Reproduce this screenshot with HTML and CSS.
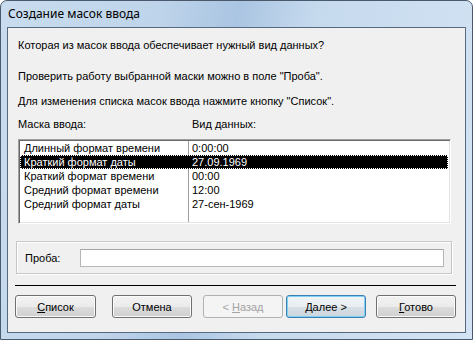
FILE: index.html
```html
<!DOCTYPE html>
<html lang="ru">
<head>
    <meta charset="UTF-8">
    <title>Создание масок ввода</title>
    <link rel="stylesheet" href="styles.css">
</head>
<body>

    <div class="window">
        <div class="titlebar">Создание масок ввода</div>

        <div class="client">
            <p class="line line-1">Которая из масок ввода обеспечивает нужный вид данных?</p>
            <p class="line line-2">Проверить работу выбранной маски можно в поле "Проба".</p>
            <p class="line line-3">Для изменения списка масок ввода нажмите кнопку "Список".</p>

            <div class="list-head">
                <span class="col-mask">Маска ввода:</span>
                <span class="col-data">Вид данных:</span>
            </div>

            <div class="listbox">
                <div class="row">
                    <span class="cell-mask">Длинный формат времени</span>
                    <span class="cell-data">0:00:00</span>
                </div>
                <div class="row selected">
                    <span class="cell-mask">Краткий формат даты</span>
                    <span class="cell-data">27.09.1969</span>
                </div>
                <div class="row">
                    <span class="cell-mask">Краткий формат времени</span>
                    <span class="cell-data">00:00</span>
                </div>
                <div class="row">
                    <span class="cell-mask">Средний формат времени</span>
                    <span class="cell-data">12:00</span>
                </div>
                <div class="row">
                    <span class="cell-mask">Средний формат даты</span>
                    <span class="cell-data">27-сен-1969</span>
                </div>
            </div>

            <div class="probe">
                <label for="probe" class="probe-label">Проба:</label>
                <input type="text" id="probe" class="probe-input">
            </div>

            <div class="separator"></div>

            <div class="buttons">
                <button class="btn btn-list"><u>С</u>писок</button>
                <button class="btn btn-cancel">Отмена</button>
                <button class="btn btn-back" disabled>&lt; <u>Н</u>азад</button>
                <button class="btn btn-next"><u>Д</u>алее &gt;</button>
                <button class="btn btn-done"><u>Г</u>отово</button>
            </div>
        </div>
    </div>

</body>
</html>
```

FILE: styles.css
```css
body {
    margin: 0;
    padding: 0;
    background-color: #ffffff;
    font-family: 'Liberation Sans', Arial, sans-serif;
    font-size: 11px;
}

.window {
    width: 473px;
    height: 340px;
    box-sizing: border-box;
    border: 1px solid #4a5a6c;
    border-radius: 7px 7px 0 0;
    background: linear-gradient(100deg, #c9dcef 0%, #bed4ea 30%, #aac5e2 45%, #c6daee 60%, #d3e3f3 100%);
    display: flex;
    flex-direction: column;
}

.titlebar {
    height: 26px;
    line-height: 26px;
    padding-left: 7px;
    font-family: 'Noto Sans', 'Open Sans', sans-serif;
    font-size: 12px;
    color: #000;
}

.client {
    margin: 0 6px 6px 6px;
    height: 306px;
    box-sizing: border-box;
    border: 1px solid #56697f;
    background-color: #f0f0f0;
    display: flex;
    flex-direction: column;
}

.line {
    margin: 0 0 0 10px;
    line-height: 14px;
    color: #000;
}

.line-1 {
    margin-top: 10px;
}

.line-2 {
    margin-top: 17px;
}

.line-3 {
    margin-top: 11px;
}

.list-head {
    display: flex;
    margin: 9px 0 0 10px;
    line-height: 14px;
}

.col-mask {
    width: 174px;
}

.listbox {
    margin: 8px 0 0 10px;
    width: 433px;
    height: 85px;
    box-sizing: border-box;
    border: 1px solid;
    border-color: #a0a0a0 #ffffff #ffffff #a0a0a0;
    box-shadow: inset 1px 1px 0 #696969, inset -1px -1px 0 #e3e3e3;
    padding: 1px 2px 0 1px;
    background: linear-gradient(to right, transparent 169px, #a0a0a0 169px, #a0a0a0 170px, transparent 170px), #ffffff;
}

.row {
    display: flex;
    height: 14px;
    line-height: 14px;
    color: #000;
}

.cell-mask {
    width: 168px;
    box-sizing: border-box;
    padding-left: 4px;
}

.cell-data {
    padding-left: 4px;
}

.selected {
    background-color: #000;
    color: #fff;
    outline: 1px dotted #ffffff;
    outline-offset: -1px;
}

.probe {
    margin: 17px 0 0 8px;
    width: 436px;
    height: 33px;
    box-sizing: border-box;
    border: 1px solid #c6c6c6;
    box-shadow: inset 1px 1px 0 #fff, 1px 1px 0 #fff;
    display: flex;
    align-items: center;
    padding-left: 8px;
}

.probe-label {
    width: 55px;
    color: #000;
}

.probe-input {
    width: 364px;
    height: 18px;
    box-sizing: border-box;
    border: 1px solid #b6b6b6;
    border-top-color: #a6a6a6;
    background-color: #fff;
    margin: 0;
    padding: 0 2px;
}

.separator {
    margin: 11px 0 0 7px;
    width: 441px;
    height: 1px;
    background-color: #000;
}

.buttons {
    display: flex;
    margin: 9px 0 0 7px;
}

.btn {
    width: 80px;
    height: 23px;
    padding: 0;
    font-family: 'Liberation Sans', Arial, sans-serif;
    font-size: 11px;
    color: #000;
    border: 1px solid #707070;
    border-radius: 3px;
    background: linear-gradient(to bottom, #f2f2f2 0%, #ebebeb 50%, #dddddd 51%, #cfcfcf 100%);
    box-shadow: inset 0 0 0 1px #fbfbfb;
}

.btn-list {
    width: 81px;
}

.btn-cancel {
    margin-left: 16px;
}

.btn-back {
    margin-left: 11px;
    color: #a3a3a3;
    border-color: #adb2b5;
    background: #f4f4f4;
    box-shadow: none;
}

.btn-next {
    margin-left: 3px;
    border-color: #3c7fb1;
    box-shadow: inset 0 0 0 1px #7fd0f5;
    background: linear-gradient(to bottom, #f0f4f7 0%, #e8edf1 50%, #d8e0e6 51%, #ccd6de 100%);
}

.btn-done {
    margin-left: 10px;
}
```
